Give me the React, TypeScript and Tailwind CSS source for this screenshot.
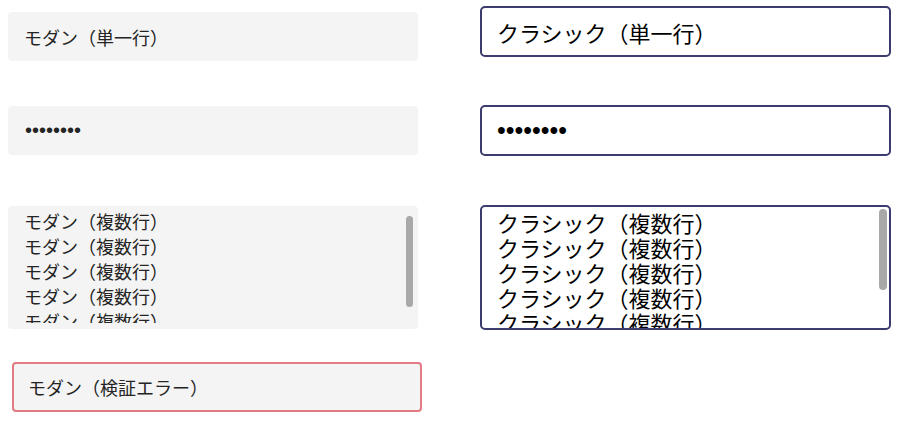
import React from "react";

const jp = "font-['Noto_Sans_CJK_JP','Noto_Sans',sans-serif]";
const dots = "font-['Liberation_Sans','Noto_Sans_CJK_JP',sans-serif]";

const modernBox =
  "block w-full bg-[#f4f4f4] rounded-[4px] text-[#242424] outline-none border-0";
const classicBox =
  "block w-full bg-white rounded-[5px] text-black outline-none border-2 border-[#3b3b6e]";

const modernLines = Array.from({ length: 6 }, () => "モダン（複数行）").join("\n");
const classicLines = Array.from({ length: 6 }, () => "クラシック（複数行）").join("\n");

function Thumb({ className }: { className: string }) {
  return (
    <div
      className={`pointer-events-none absolute rounded-full bg-[#a8a8a8] ${className}`}
    />
  );
}

export default function App() {
  return (
    <div className="min-h-[422px] w-[904px] bg-white">
      <div className="grid grid-cols-[410px_411px] grid-rows-[100px_100px_155px_auto] items-start gap-x-[62px] pl-[8px]">
        {/* Row 1: single line */}
        <input
          type="text"
          readOnly
          defaultValue="モダン（単一行）"
          className={`${modernBox} ${jp} mt-[12px] h-[49px] pl-[16px] text-[18px]`}
        />
        <input
          type="text"
          readOnly
          defaultValue="クラシック（単一行）"
          className={`${classicBox} ${jp} mt-[6px] h-[51px] pl-[15px] text-[22px]`}
        />

        {/* Row 2: password */}
        <input
          type="password"
          readOnly
          defaultValue="password"
          className={`${modernBox} ${dots} mt-[6px] h-[49px] pl-[17px] text-[20px]`}
        />
        <input
          type="password"
          readOnly
          defaultValue="password"
          className={`${classicBox} ${dots} mt-[5px] h-[51px] pl-[15px] text-[25px]`}
        />

        {/* Row 3: multi line */}
        <div className="relative mt-[6px]">
          <textarea
            readOnly
            defaultValue={modernLines}
            className={`${modernBox} ${jp} h-[123px] resize-none overflow-hidden border-b-[6px] border-solid border-transparent pl-[16px] pt-[3px] text-[18px] leading-[25px]`}
          />
          <Thumb className="right-[5px] top-[10px] h-[91px] w-[7px]" />
        </div>
        <div className="relative mt-[5px]">
          <textarea
            readOnly
            defaultValue={classicLines}
            className={`${classicBox} ${jp} h-[125px] resize-none overflow-hidden pl-[15px] pt-[3px] text-[22px] leading-[25px]`}
          />
          <Thumb className="right-[4px] top-[4px] h-[81px] w-[8px]" />
        </div>

        {/* Row 4: validation error */}
        <input
          type="text"
          readOnly
          defaultValue="モダン（検証エラー）"
          className={`${modernBox} ${jp} ml-[4px] mt-[7px] h-[50px] border-2 border-solid border-[#e27b82] pl-[14px] text-[18px]`}
        />
        <div />
      </div>
    </div>
  );
}
